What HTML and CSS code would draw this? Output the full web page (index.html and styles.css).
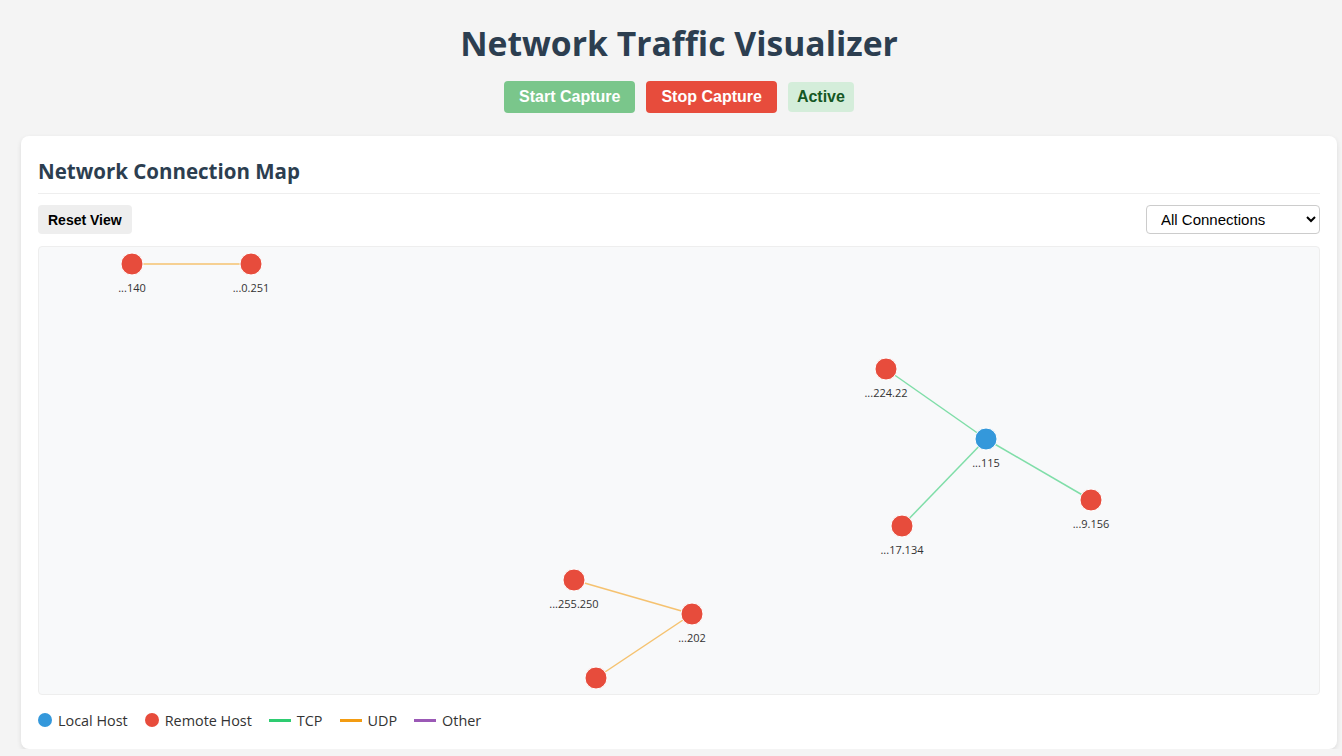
FILE: index.html
```html
<!DOCTYPE html>
<html lang="en">
<head>
<meta charset="utf-8">
<title>Network Traffic Visualizer</title>
<link rel="stylesheet" href="styles.css">
</head>
<body>
<div class="page">
  <header class="header">
    <h1 class="title">Network Traffic Visualizer</h1>
    <div class="controls">
      <button class="btn btn-start">Start Capture</button>
      <button class="btn btn-stop">Stop Capture</button>
      <span class="status">Active</span>
    </div>
  </header>

  <section class="card">
    <h2 class="card-title">Network Connection Map</h2>
    <div class="toolbar">
      <button class="btn-reset">Reset View</button>
      <select class="filter">
        <option>All Connections</option>
        <option>TCP Only</option>
        <option>UDP Only</option>
      </select>
    </div>
    <div class="map">
      <svg class="map-svg" width="100%" height="447">
        <g class="links">
          <line class="link udp" x1="93" y1="17" x2="212" y2="17"/>
          <line class="link tcp" x1="847" y1="122" x2="947" y2="192"/>
          <line class="link tcp" x1="947" y1="192" x2="1052" y2="253"/>
          <line class="link tcp" x1="947" y1="192" x2="863" y2="279"/>
          <line class="link udp" x1="535" y1="333" x2="653" y2="367"/>
          <line class="link udp" x1="653" y1="367" x2="557" y2="431"/>
        </g>
        <g class="nodes">
          <circle class="node remote" cx="93" cy="17" r="11"/>
          <text class="label" x="93" y="45">...140</text>
          <circle class="node remote" cx="212" cy="17" r="11"/>
          <text class="label" x="212" y="45">...0.251</text>
          <circle class="node remote" cx="847" cy="122" r="11"/>
          <text class="label" x="847" y="150">...224.22</text>
          <circle class="node local" cx="947" cy="192" r="11"/>
          <text class="label" x="947" y="220">...115</text>
          <circle class="node remote" cx="1052" cy="253" r="11"/>
          <text class="label" x="1052" y="281">...9.156</text>
          <circle class="node remote" cx="863" cy="279" r="11"/>
          <text class="label" x="863" y="307">...17.134</text>
          <circle class="node remote" cx="535" cy="333" r="11"/>
          <text class="label" x="535" y="361">...255.250</text>
          <circle class="node remote" cx="653" cy="367" r="11"/>
          <text class="label" x="653" y="395">...202</text>
          <circle class="node remote" cx="557" cy="431" r="11"/>
        </g>
      </svg>
    </div>
    <div class="legend">
      <div class="legend-item"><span class="dot dot-local"></span>Local Host</div>
      <div class="legend-item"><span class="dot dot-remote"></span>Remote Host</div>
      <div class="legend-item"><span class="swatch swatch-tcp"></span>TCP</div>
      <div class="legend-item"><span class="swatch swatch-udp"></span>UDP</div>
      <div class="legend-item"><span class="swatch swatch-other"></span>Other</div>
    </div>
  </section>
</div>
</body>
</html>
```

FILE: styles.css
```css
* { box-sizing: border-box; }

html, body {
  margin: 0;
  padding: 0;
  background: #f4f4f4;
  font-family: "Open Sans", "Noto Sans", sans-serif;
  color: #333;
  overflow: hidden;
}

.page {
  padding: 0 5px 0 21px;
}

.header {
  display: flex;
  flex-direction: column;
  align-items: center;
}

.title {
  margin: 21px 0 16px;
  font-size: 33.7px;
  line-height: 44px;
  font-weight: 700;
  color: #2c3e50;
}

.controls {
  display: flex;
  align-items: center;
  gap: 11px;
  height: 32px;
}

.btn {
  font-family: "Liberation Sans", Arial, sans-serif;
  font-size: 16px;
  font-weight: 700;
  color: #fff;
  border: none;
  border-radius: 4px;
  padding: 7px 15px;
  height: 32px;
  line-height: 18px;
}

.btn-start { background: #7ac68b; }
.btn-stop { background: #e74c3c; }

.status {
  font-family: "Liberation Sans", Arial, sans-serif;
  font-size: 16px;
  font-weight: 700;
  color: #155724;
  background: #d4edda;
  border-radius: 4px;
  padding: 6px 9px;
  line-height: 18px;
}

.card {
  margin-top: 23px;
  background: #fff;
  border-radius: 8px;
  box-shadow: 0 2px 5px rgba(0, 0, 0, 0.1);
  padding: 20px 17px 19px;
}

.card-title {
  margin: 0;
  font-size: 20.5px;
  line-height: 30px;
  font-weight: 700;
  color: #2c3e50;
  padding-bottom: 7px;
  border-bottom: 1px solid #eee;
}

.toolbar {
  display: flex;
  justify-content: space-between;
  align-items: center;
  margin: 11px 0 12px;
}

.btn-reset {
  font-family: "Liberation Sans", Arial, sans-serif;
  font-size: 14px;
  font-weight: 700;
  color: #000;
  background: #eee;
  border: none;
  border-radius: 4px;
  height: 29px;
  padding: 0 10px;
}

.filter {
  font-family: "Liberation Sans", Arial, sans-serif;
  font-size: 15px;
  color: #000;
  width: 174px;
  height: 29px;
  padding: 0 6px 0 10px;
  border: 1px solid #ccc;
  border-radius: 4px;
  background: #fff;
}

.map {
  height: 449px;
  background: #f8f9fa;
  border: 1px solid #eee;
  border-radius: 4px;
  overflow: hidden;
}

.map-svg { display: block; }

.link {
  stroke-width: 1.5;
  stroke-opacity: 0.6;
}
.link.tcp { stroke: #2ecc71; }
.link.udp { stroke: #f39c12; }

.node {
  stroke: #fff;
  stroke-width: 1;
}
.node.remote { fill: #e74c3c; }
.node.local { fill: #3498db; }

.label {
  font-family: "Open Sans", "Noto Sans", sans-serif;
  font-size: 11px;
  fill: #333;
  text-anchor: middle;
}

.legend {
  display: flex;
  align-items: center;
  gap: 17px;
  margin-top: 15px;
  height: 20px;
  font-size: 14.4px;
  color: #333;
}

.legend-item {
  display: flex;
  align-items: center;
  gap: 6px;
}

.dot {
  width: 14px;
  height: 14px;
  border-radius: 50%;
}
.dot-local { background: #3498db; }
.dot-remote { background: #e74c3c; }

.swatch {
  width: 22px;
  height: 3px;
}
.swatch-tcp { background: #2ecc71; }
.swatch-udp { background: #f39c12; }
.swatch-other { background: #9b59b6; }
```
